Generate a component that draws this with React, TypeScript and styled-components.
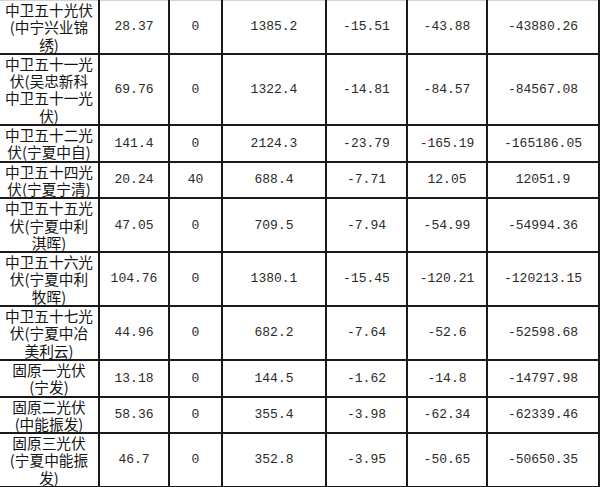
import React from 'react';
import styled, { createGlobalStyle } from 'styled-components';

const GlobalStyle = createGlobalStyle`
    html, body {
        margin: 0;
        padding: 0;
        background: #ffffff;
    }
`;

const Sheet = styled.table`
    border-collapse: collapse;
    table-layout: fixed;
    width: 599px;
    background: #ffffff;
    color: #161616;
`;

const Row = styled.tr<{ $first?: boolean }>`
    td {
        border-top: ${({ $first }) => ($first ? '1px solid #d4d4d4' : '2px solid #1a1a1a')};
    }
`;

const Cell = styled.td`
    border: 2px solid #1a1a1a;
    padding: 0;
    text-align: center;
    vertical-align: middle;
    line-height: 17.3px;
    font-family: 'Liberation Mono', 'DejaVu Sans Mono', monospace;
    font-size: 13px;
    color: #2a2a2a;
    white-space: nowrap;
`;

const NameCell = styled(Cell)`
    border-left: none;
    font-family: 'Noto Sans CJK SC', 'Noto Sans', sans-serif;
    font-size: 14.7px;
    color: #141414;
    white-space: pre;
`;

type Station = {
    name: string;
    values: string[];
};

const stations: Station[] = [
    { name: '中卫五十光伏\n(中宁兴业锦\n绣)', values: ['28.37', '0', '1385.2', '-15.51', '-43.88', '-43880.26'] },
    { name: '中卫五十一光\n伏(吴忠新科\n中卫五十一光\n伏)', values: ['69.76', '0', '1322.4', '-14.81', '-84.57', '-84567.08'] },
    { name: '中卫五十二光\n伏(宁夏中自)', values: ['141.4', '0', '2124.3', '-23.79', '-165.19', '-165186.05'] },
    { name: '中卫五十四光\n伏(宁夏宁清)', values: ['20.24', '40', '688.4', '-7.71', '12.05', '12051.9'] },
    { name: '中卫五十五光\n伏(宁夏中利\n淇晖)', values: ['47.05', '0', '709.5', '-7.94', '-54.99', '-54994.36'] },
    { name: '中卫五十六光\n伏(宁夏中利\n牧晖)', values: ['104.76', '0', '1380.1', '-15.45', '-120.21', '-120213.15'] },
    { name: '中卫五十七光\n伏(宁夏中冶\n美利云)', values: ['44.96', '0', '682.2', '-7.64', '-52.6', '-52598.68'] },
    { name: '固原一光伏\n(宁发)', values: ['13.18', '0', '144.5', '-1.62', '-14.8', '-14797.98'] },
    { name: '固原二光伏\n(中能振发)', values: ['58.36', '0', '355.4', '-3.98', '-62.34', '-62339.46'] },
    { name: '固原三光伏\n(宁夏中能振\n发)', values: ['46.7', '0', '352.8', '-3.95', '-50.65', '-50650.35'] },
];

const columnWidths = [99, 70, 53, 104, 81, 80, 112];

export default function App() {
    return (
        <>
            <GlobalStyle />
            <Sheet>
                <colgroup>
                    {columnWidths.map((w, i) => (
                        <col key={i} style={{ width: w }} />
                    ))}
                </colgroup>
                <tbody>
                    {stations.map((s, i) => (
                        <Row key={s.name} $first={i === 0}>
                            <NameCell>{s.name}</NameCell>
                            {s.values.map((v, j) => (
                                <Cell key={j}>{v}</Cell>
                            ))}
                        </Row>
                    ))}
                </tbody>
            </Sheet>
        </>
    );
}
